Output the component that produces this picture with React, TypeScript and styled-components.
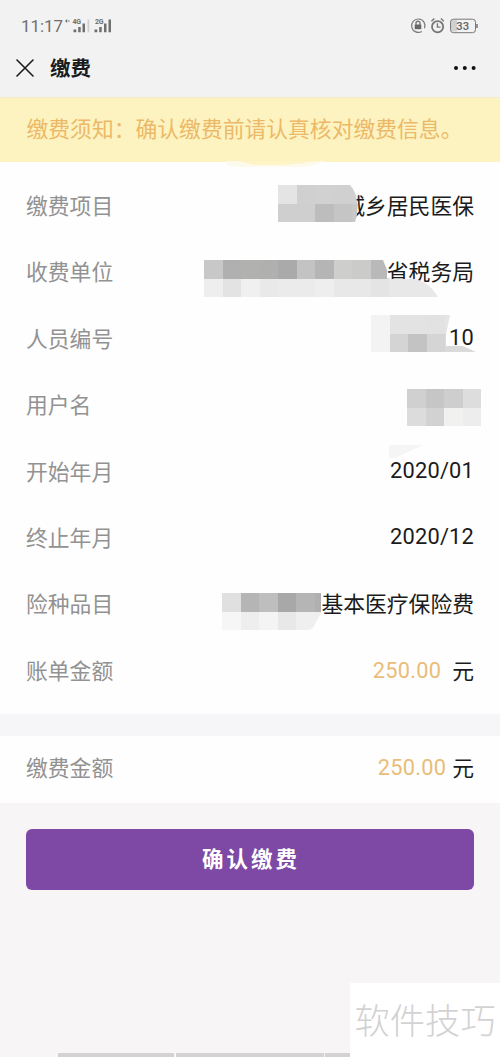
import React from "react";
import styled, { createGlobalStyle } from "styled-components";

const Global = createGlobalStyle`
  * { box-sizing: border-box; }
  body { margin: 0; background: #f7f5f6; }
`;

const Page = styled.main`
  position: relative;
  display: flex;
  flex-direction: column;
  width: 500px;
  height: 1057px;
  overflow: hidden;
  background: #f7f5f6;
  font-family: Roboto, "Noto Sans CJK SC", sans-serif;
  color: #1b1b1b;
`;

const StatusBar = styled.header`
  display: flex;
  align-items: center;
  justify-content: space-between;
  height: 50px;
  padding: 2px 22px 0 21px;
  background: #f2f2f2;
  color: #6f6f6f;
`;

const StatusGroup = styled.div`
  display: flex;
  align-items: center;
`;

const Clock = styled.span`
  font-size: 17px;
  line-height: 20px;
  letter-spacing: -0.1px;
`;

const NavBar = styled.nav`
  display: flex;
  align-items: center;
  height: 47px;
  padding: 0 23px 11px 16px;
  background: #f2f2f2;
`;

const Title = styled.h1`
  flex: 1;
  margin: 2px 0 0 16px;
  font-size: 20.5px;
  line-height: 30px;
  font-weight: 700;
`;

const Notice = styled.p`
  display: flex;
  align-items: center;
  height: 65px;
  margin: 0;
  padding: 0 0 5px 26.5px;
  border-top: 1px solid #f4ebcb;
  background: #fdf3c0;
  color: #ecb968;
  font-size: 21.8px;
  white-space: nowrap;
`;

const Section = styled.section<{ $pad: string }>`
  padding: ${(p) => p.$pad};
  background: #fefefe;
`;

const Row = styled.div<{ $height?: number }>`
  display: flex;
  align-items: center;
  justify-content: space-between;
  height: ${(p) => p.$height ?? 66.4}px;
  padding: 0 26px;
  font-size: 21.8px;
  line-height: 32px;
`;

const Label = styled.span`
  color: #929292;
`;

const Value = styled.span`
  display: flex;
  align-items: center;
  white-space: nowrap;
`;

const ValueText = styled.span<{ $numeric?: boolean }>`
  padding-bottom: ${(p) => (p.$numeric ? "4px" : "0")};
  letter-spacing: ${(p) => (p.$numeric ? "0.2px" : "0")};
`;

const Amount = styled.span<{ $gap: number }>`
  margin-right: ${(p) => p.$gap}px;
  padding-bottom: 2px;
  color: #e9bd78;
  letter-spacing: 0.25px;
`;

const Divider = styled.div`
  height: 22px;
  background: #f6f5f8;
`;

const Submit = styled.button`
  width: 448px;
  height: 61px;
  margin: 26px auto 0;
  padding: 1px 0 0 2px;
  border: 0;
  border-radius: 6px;
  background: #7d49a5;
  color: #fff;
  font: 700 21.5px/30px Roboto, "Noto Sans CJK SC", sans-serif;
  letter-spacing: 3px;
`;

const MosaicArt = styled.svg<{ $shift: number; $overlap: number }>`
  position: relative;
  z-index: 1;
  flex: none;
  margin-top: ${(p) => p.$shift}px;
  margin-right: ${(p) => -p.$overlap}px;
`;

const NoticeSmudge = styled.svg`
  position: absolute;
  left: 226px;
  top: 161px;
`;

const PaperSmudge = styled.svg`
  position: absolute;
  left: 389px;
  top: 445px;
`;

const Watermark = styled.div`
  position: absolute;
  right: 0;
  bottom: 0;
  width: 150px;
  height: 74px;
  padding-left: 4.5px;
  background: #fff;
  color: #d2d2d2;
  font: 300 35.3px/72px "Noto Sans CJK SC", sans-serif;
  white-space: nowrap;
`;

const BottomEdge = styled.div`
  display: grid;
  grid-template-columns: 116px 148px 26px;
  gap: 1.5px;
  height: 4px;
  margin-top: auto;
  margin-left: 58px;
`;

const EdgePiece = styled.span`
  background: #d4d2d3;
`;

type MosaicProps = {
  width: number;
  shift: number;
  overlap: number;
  clip: string;
  rows: string[][];
};

const CELL = 18.5;

function Mosaic({ width, shift, overlap, clip, rows }: MosaicProps) {
  const id = `mosaic-${width}`;
  return (
    <MosaicArt $shift={shift} $overlap={overlap} width={width} height={37} aria-hidden="true">
      <clipPath id={id}>
        <path d={clip} />
      </clipPath>
      <g clipPath={`url(#${id})`} shapeRendering="crispEdges">
        {rows.map((row, r) =>
          row.map((fill, c) => (
            <rect key={`${r}-${c}`} x={c * CELL} y={r * CELL} width={CELL + 0.5} height={CELL + 0.5} fill={fill} />
          ))
        )}
      </g>
    </MosaicArt>
  );
}

function Signal() {
  return (
    <svg width="50" height="20" viewBox="0 0 50 20" fill="#6f6f6f" fontFamily="Roboto, sans-serif">
      <path d="M2 5l2.200-2v4zM5 4.500h1.500v1H5z" />
      <text x="9.500" y="7.500" fontSize="7" fontWeight="700" textLength="8.500">4G</text>
      <path d="M10.500 13.500h2.800v2.800h-2.800zM15.200 11h2.500v5.300h-2.500zM19.500 7.500H22v8.800h-2.500z" />
      <path d="M24.500 3.500h1.800v12.800h-1.800z" fill="#cfcfcf" />
      <text x="32" y="7.500" fontSize="7" fontWeight="700" textLength="8.500">2G</text>
      <path d="M31.500 13.500h2.800v2.800h-2.800zM36.200 11h2.500v5.300h-2.500zM41 7.500h2.500v8.800H41zM45.500 3.500H48v12.800h-2.500z" />
    </svg>
  );
}

function StatusIcons() {
  return (
    <svg width="68" height="18" viewBox="0 0 68 18" fill="none" stroke="#777" strokeWidth="1.400">
      <path d="M11.800 14.400A6.700 6.700 0 1 1 14.500 11.200" strokeWidth="1.200" />
      <path d="M4.700 7.500h6.600v4.700H4.700z" fill="#666" stroke="none" />
      <path d="M6 8V6.300a2 2 0 0 1 4 0V8" />
      <circle cx="27.600" cy="9.700" r="5.600" strokeWidth="1.800" />
      <path d="M27.400 6.200v3.900h3.200M21.400 4.200l3-2.700M33.800 4.200l-3-2.700" />
      <path d="M47 3h-3.500A2.500 2.500 0 0 0 41 5.500v6.500a2.500 2.500 0 0 0 2.500 2.500H47z" fill="#d0d0d0" stroke="none" />
      <rect x="40.500" y="2.200" width="25" height="13.500" rx="3" strokeWidth="1" />
      <path d="M67 7v4" strokeWidth="1.500" />
      <text x="46.300" y="13" fill="#666" stroke="none" fontFamily="Roboto, sans-serif" fontSize="11.300" fontWeight="500">33</text>
    </svg>
  );
}

type Item = { label: string; value?: string; numeric?: boolean; mosaic?: MosaicProps };

const items: Item[] = [
  {
    label: "缴费项目",
    value: "城乡居民医保",
    mosaic: {
      width: 79,
      shift: -7.5,
      overlap: 14,
      clip: "M0 0H72Q79 8 79 18V30L77 37H0Z",
      rows: [
        ["#e4e4e5", "#d0d0d0", "#d1d1d1", "#d0d0d0", "#d0d0d0"],
        ["#cfcfcf", "#cfcfcf", "#bdbdbd", "#c5c5c5", "#c8c8c8"],
      ],
    },
  },
  {
    label: "收费单位",
    value: "省税务局",
    mosaic: {
      width: 234,
      shift: 9.5,
      overlap: 51,
      clip: "M0 0H179L183 10V18.500H207Q224 20 234 37H0Z",
      rows: [
        ["#c8c8c9", "#b0b0b0", "#b1b1af", "#b0b0af", "#aaaaaa", "#c3c3c3", "#b5b5b5", "#cececd", "#cbcbca", "#b9b9b9"],
        ["#eeeeef", "#e3e3e4", "#f0f0f1", "#e9e9ea", "#ebebec", "#ebebec", "#eeeeef", "#e8e8e8", "#e8e8e8", "#e4e4e4", "#e8e8e8", "#e8e8e8", "#e8e8e8"],
      ],
    },
  },
  {
    label: "人员编号",
    value: "10",
    numeric: true,
    mosaic: {
      width: 105,
      shift: -13,
      overlap: 27,
      clip: "M0 0H79L75 20V31H92L105 37H0Z",
      rows: [
        ["#f3f3f3", "#e3e3e3", "#e3e3e3", "#e2e2e2", "#e5e5e5"],
        ["#f3f3f3", "#d4d4d4", "#c3c3c3", "#d5d5d5", "#dadada", "#dadada"],
      ],
    },
  },
  {
    label: "用户名",
    mosaic: {
      width: 74,
      shift: 2,
      overlap: 7,
      clip: "M0 0H74V37H0Z",
      rows: [
        ["#d0d0d0", "#c6c6c6", "#cecece", "#dddddd"],
        ["#dcdcdc", "#d2d2d2", "#f1f1f0", "#ededed"],
      ],
    },
  },
  { label: "开始年月", value: "2020/01", numeric: true },
  { label: "终止年月", value: "2020/12", numeric: true },
  {
    label: "险种品目",
    value: "基本医疗保险费",
    mosaic: {
      width: 99,
      shift: 11.5,
      overlap: 0,
      clip: "M0 0H99V20L92 33Q90 37 85 37H0Z",
      rows: [
        ["#e0e0e0", "#b5b5b5", "#bebebe", "#a8a8a8", "#b5b5b5", "#b0b0b0"],
        ["#f6f6f6", "#eeeeee", "#f4f4f4", "#e8e8e8", "#efefef", "#efefef"],
      ],
    },
  },
];

export default function App() {
  return (
    <Page>
      <Global />
      <StatusBar>
        <StatusGroup>
          <Clock>11:17</Clock>
          <Signal />
        </StatusGroup>
        <StatusIcons />
      </StatusBar>
      <NavBar>
        <svg width="18" height="18" viewBox="0 0 18 18" stroke="#1b1b1b" strokeWidth="1.600" strokeLinecap="round">
          <path d="M1 1l16 16M17 1L1 17" />
        </svg>
        <Title>缴费</Title>
        <svg width="24" height="6" viewBox="0 0 24 6" fill="#111">
          <circle cx="3" cy="3" r="2" />
          <circle cx="11.800" cy="3" r="2" />
          <circle cx="20.600" cy="3" r="2" />
        </svg>
      </NavBar>
      <Notice>缴费须知：确认缴费前请认真核对缴费信息。</Notice>
      <Section $pad="11.8px 0 9.2px">
        {items.map((item) => (
          <Row key={item.label}>
            <Label>{item.label}</Label>
            <Value>
              {item.mosaic && <Mosaic {...item.mosaic} />}
              {item.value && <ValueText $numeric={item.numeric}>{item.value}</ValueText>}
            </Value>
          </Row>
        ))}
        <Row>
          <Label>账单金额</Label>
          <Value>
            <Amount $gap={11}>250.00</Amount>元
          </Value>
        </Row>
      </Section>
      <Divider />
      <Section $pad="0 0 2px">
        <Row $height={64.8}>
          <Label>缴费金额</Label>
          <Value>
            <Amount $gap={6}>250.00</Amount>元
          </Value>
        </Row>
      </Section>
      <Submit type="button">确认缴费</Submit>
      <BottomEdge>
        <EdgePiece />
        <EdgePiece />
        <EdgePiece />
      </BottomEdge>

      <NoticeSmudge width="98" height="7" aria-hidden="true">
        <path d="M0 0H98V1C88 2 88 6 76 6H15Q4 5 0 3Z" fill="#fefaeb" />
        <path d="M12 0H94L60 4H28Z" fill="#fdf4c8" />
      </NoticeSmudge>
      <PaperSmudge width="34" height="13" aria-hidden="true">
        <path d="M0 0H34L6 13H0Z" fill="#f5f5f5" />
      </PaperSmudge>
      <Watermark>软件技巧</Watermark>
    </Page>
  );
}
